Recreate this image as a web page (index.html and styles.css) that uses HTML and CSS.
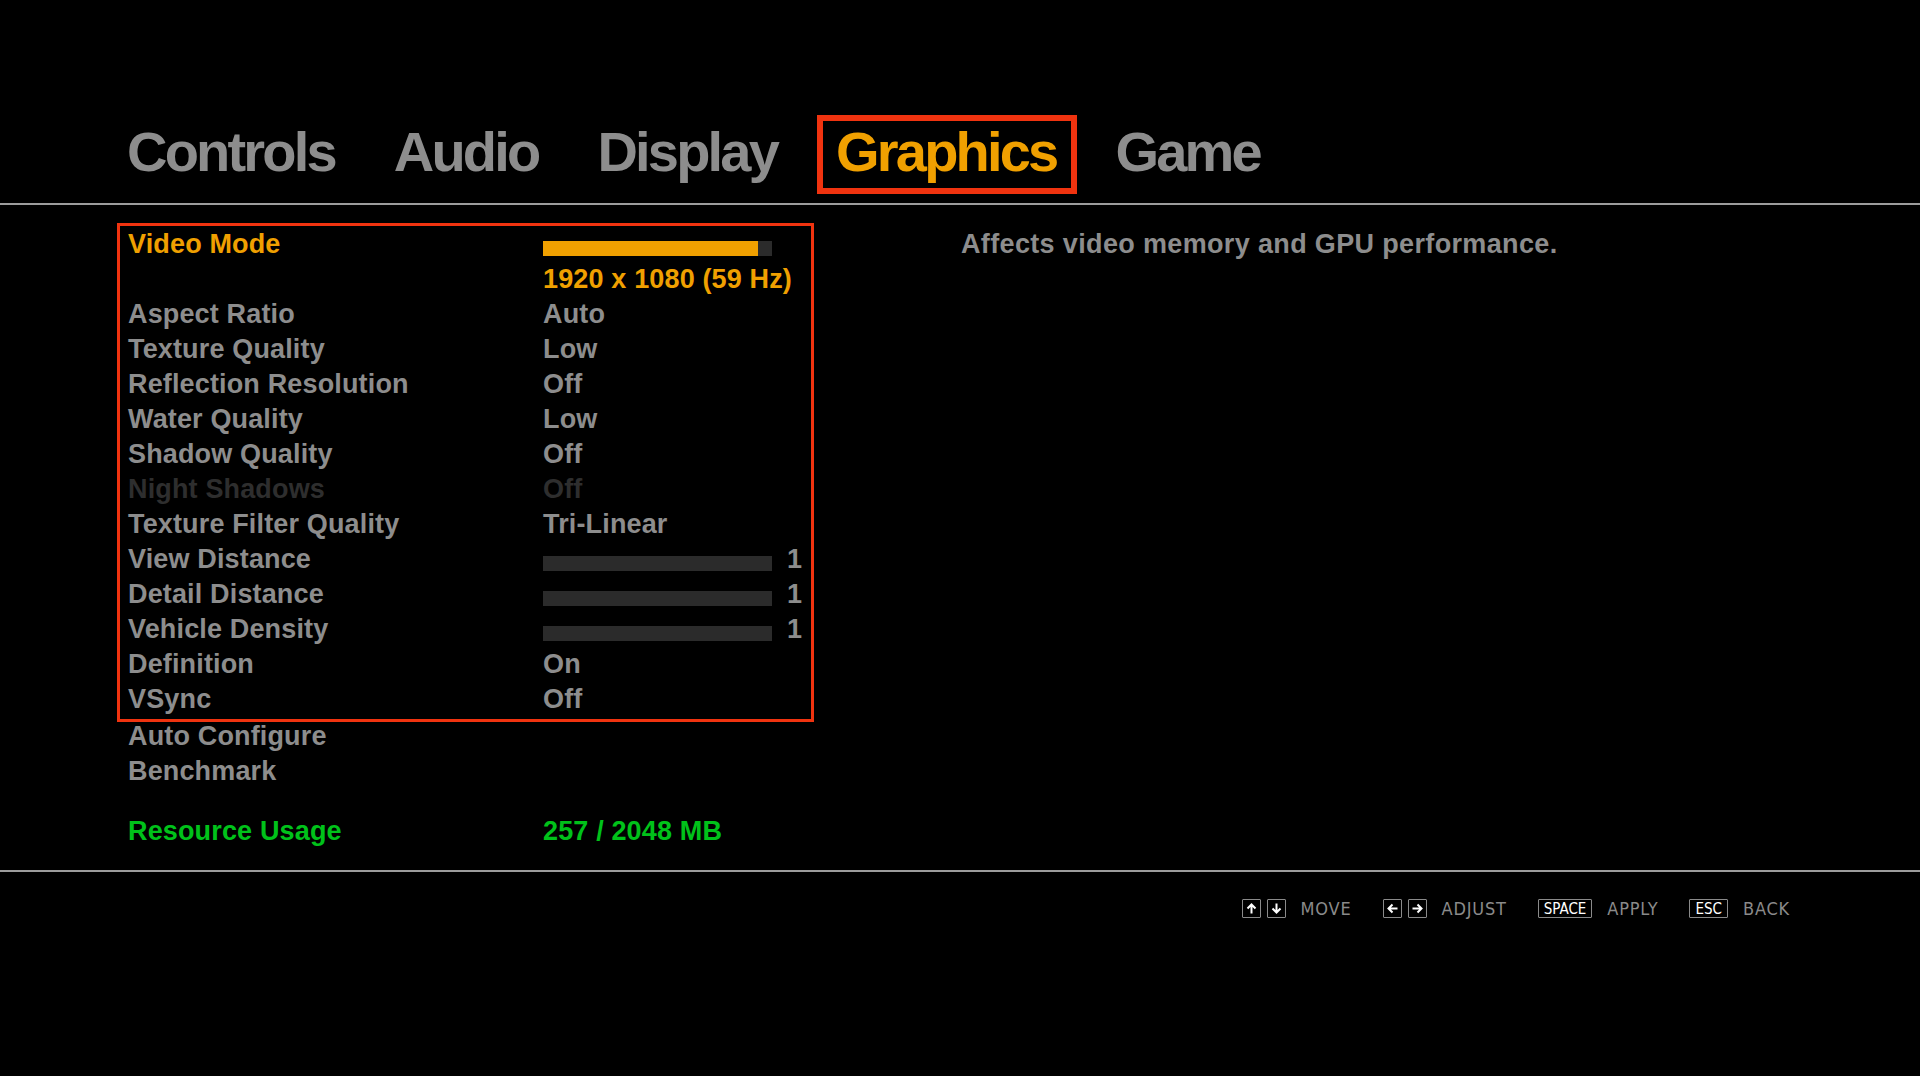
FILE: index.html
```html
<!DOCTYPE html>
<html lang="en">
<head>
    <meta charset="UTF-8">
    <meta name="viewport" content="width=device-width, initial-scale=1.0">
    <title>Settings - Graphics</title>
    <link rel="stylesheet" href="styles.css">
</head>
<body>
    <div class="menu">
        <nav class="tabs">
            <div class="tab">Controls</div>
            <div class="tab">Audio</div>
            <div class="tab">Display</div>
            <div class="tab active">Graphics</div>
            <div class="tab">Game</div>
        </nav>
        <div class="rule"></div>

        <div class="content">
            <div class="settings">
                <div class="settings-box">
                    <div class="row selected">
                        <div class="label">Video Mode</div>
                        <div class="value"><div class="bar"><div class="bar-fill" style="width: 94%"></div></div></div>
                    </div>
                    <div class="row selected">
                        <div class="label"></div>
                        <div class="value">1920 x 1080 (59 Hz)</div>
                    </div>
                    <div class="row">
                        <div class="label">Aspect Ratio</div>
                        <div class="value">Auto</div>
                    </div>
                    <div class="row">
                        <div class="label">Texture Quality</div>
                        <div class="value">Low</div>
                    </div>
                    <div class="row">
                        <div class="label">Reflection Resolution</div>
                        <div class="value">Off</div>
                    </div>
                    <div class="row">
                        <div class="label">Water Quality</div>
                        <div class="value">Low</div>
                    </div>
                    <div class="row">
                        <div class="label">Shadow Quality</div>
                        <div class="value">Off</div>
                    </div>
                    <div class="row disabled">
                        <div class="label">Night Shadows</div>
                        <div class="value">Off</div>
                    </div>
                    <div class="row">
                        <div class="label">Texture Filter Quality</div>
                        <div class="value">Tri-Linear</div>
                    </div>
                    <div class="row">
                        <div class="label">View Distance</div>
                        <div class="value"><div class="bar"></div><span class="level">1</span></div>
                    </div>
                    <div class="row">
                        <div class="label">Detail Distance</div>
                        <div class="value"><div class="bar"></div><span class="level">1</span></div>
                    </div>
                    <div class="row">
                        <div class="label">Vehicle Density</div>
                        <div class="value"><div class="bar"></div><span class="level">1</span></div>
                    </div>
                    <div class="row">
                        <div class="label">Definition</div>
                        <div class="value">On</div>
                    </div>
                    <div class="row">
                        <div class="label">VSync</div>
                        <div class="value">Off</div>
                    </div>
                </div>
                <div class="row">
                    <div class="label">Auto Configure</div>
                </div>
                <div class="row">
                    <div class="label">Benchmark</div>
                </div>
                <div class="row usage">
                    <div class="label">Resource Usage</div>
                    <div class="value">257 / 2048 MB</div>
                </div>
            </div>
            <div class="description">Affects video memory and GPU performance.</div>
        </div>

        <div class="rule"></div>

        <div class="hints">
            <div class="hint">
                <span class="key">
                    <svg width="13" height="13" viewBox="0 0 13 13"><path d="M6.5 11.5V2.5M2.5 6.5l4-4 4 4" fill="none" stroke="#fff" stroke-width="2"/></svg>
                </span>
                <span class="key">
                    <svg width="13" height="13" viewBox="0 0 13 13"><path d="M6.5 1.5v9M2.5 6.5l4 4 4-4" fill="none" stroke="#fff" stroke-width="2"/></svg>
                </span>
                <span class="hint-label">MOVE</span>
            </div>
            <div class="hint">
                <span class="key">
                    <svg width="13" height="13" viewBox="0 0 13 13"><path d="M11.5 6.5H2.5M6.5 2.5l-4 4 4 4" fill="none" stroke="#fff" stroke-width="2"/></svg>
                </span>
                <span class="key">
                    <svg width="13" height="13" viewBox="0 0 13 13"><path d="M1.5 6.5h9M6.5 2.5l4 4-4 4" fill="none" stroke="#fff" stroke-width="2"/></svg>
                </span>
                <span class="hint-label">ADJUST</span>
            </div>
            <div class="hint">
                <span class="key key-text">SPACE</span>
                <span class="hint-label">APPLY</span>
            </div>
            <div class="hint">
                <span class="key key-text">ESC</span>
                <span class="hint-label">BACK</span>
            </div>
        </div>
    </div>
</body>
</html>
```

FILE: styles.css
```css
body, html {
    margin: 0;
    padding: 0;
    height: 100%;
}

body {
    background-color: #000;
    color: #8d8d8d;
    font-family: "Liberation Sans", Arial, sans-serif;
    font-weight: bold;
}

.menu {
    padding-top: 115px;
}

/* top tab strip */
.tabs {
    display: flex;
    gap: 19px;
    padding-left: 108px;
}

.tab {
    font-size: 56px;
    line-height: 58px;
    letter-spacing: -2.8px;
    padding: 2px 15px 7px 13px;
    border: 6px solid transparent;
    color: #8d8d8d;
}

.tab.active {
    color: #f0a000;
    border-color: #f0330f;
}

.rule {
    height: 2px;
    background-color: #9c9c9c;
}

.tabs + .rule {
    margin-top: 9px;
}

/* settings list */
.content {
    display: flex;
    padding-top: 21px;
    height: 665px;
    box-sizing: border-box;
}

.settings {
    width: 691px;
    margin-left: 120px;
}

.settings-box {
    padding: 1px 0 2px;
    outline: 3px solid #f0330f;
}

.row {
    display: flex;
    height: 35px;
    line-height: 35px;
    font-size: 27px;
    letter-spacing: 0.15px;
}

.label {
    width: 423px;
    padding-left: 8px;
    box-sizing: border-box;
}

.value {
    flex: 1;
    display: flex;
    align-items: center;
}

.row.selected {
    color: #f0a000;
}

.row.disabled {
    color: #2e2e2e;
}

.bar {
    width: 229px;
    height: 15px;
    margin-top: 8px;
    background-color: #2b2b2b;
}

.bar-fill {
    height: 100%;
    background-color: #f0a000;
}

.level {
    margin-left: 15px;
}

.row.usage {
    margin-top: 25px;
    color: #00c21a;
}

.description {
    margin-left: 150px;
    padding-top: 1px;
    font-size: 27px;
    line-height: 35px;
    letter-spacing: 0.35px;
}

/* key hints */
.hints {
    display: flex;
    justify-content: flex-end;
    gap: 31px;
    padding-right: 130px;
    padding-top: 26px;
    font-family: "DejaVu Sans Condensed", sans-serif;
    font-weight: normal;
}

.hint {
    display: flex;
    align-items: center;
    gap: 6px;
}

.key {
    width: 17px;
    height: 17px;
    border: 1px solid #8a8a8a;
    border-radius: 1px;
    display: flex;
    align-items: center;
    justify-content: center;
}

.key-text {
    width: auto;
    padding: 0 5px;
    color: #fff;
    font-size: 15px;
}

.hint-label {
    margin-left: 9px;
    font-size: 18px;
    letter-spacing: 0.8px;
    color: #8a8a8a;
}
```
